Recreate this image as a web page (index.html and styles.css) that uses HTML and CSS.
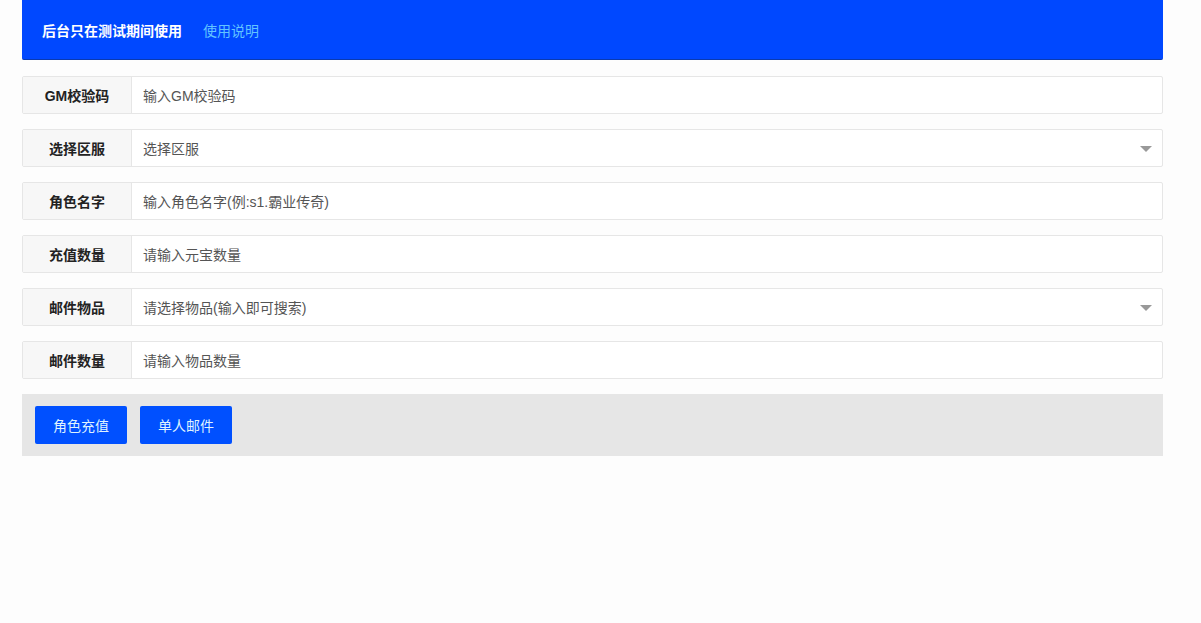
FILE: index.html
```html
<!DOCTYPE html>
<html>
<head>
  <meta charset="utf-8">
  <link rel="stylesheet" href="styles.css">
</head>
<body>
  <div class="gm-panel">
    <div class="notice">
      <span class="notice-text">后台只在测试期间使用</span>
      <a class="notice-link">使用说明</a>
    </div>

    <div class="form-row">
      <label class="row-label">GM校验码</label>
      <div class="row-input">输入GM校验码</div>
    </div>

    <div class="form-row">
      <label class="row-label">选择区服</label>
      <div class="row-input select">选择区服<span class="arrow"></span></div>
    </div>

    <div class="form-row">
      <label class="row-label">角色名字</label>
      <div class="row-input">输入角色名字(例:s1.霸业传奇)</div>
    </div>

    <div class="form-row">
      <label class="row-label">充值数量</label>
      <div class="row-input">请输入元宝数量</div>
    </div>

    <div class="form-row">
      <label class="row-label">邮件物品</label>
      <div class="row-input select">请选择物品(输入即可搜索)<span class="arrow"></span></div>
    </div>

    <div class="form-row">
      <label class="row-label">邮件数量</label>
      <div class="row-input">请输入物品数量</div>
    </div>

    <div class="actions">
      <button class="btn">角色充值</button>
      <button class="btn">单人邮件</button>
    </div>
  </div>
</body>
</html>
```

FILE: styles.css
```css
body {
  margin: 0;
  background-color: #fdfdfd;
  font-family: "Liberation Sans", "Noto Sans CJK SC", sans-serif;
  font-size: 14px;
  color: #333;
}

.gm-panel {
  width: 1141px;
  margin-left: 22px;
}

.notice {
  height: 59px;
  background-color: #0048ff;
  border-bottom: 1px solid #0a3ab0;
  border-radius: 0 0 2px 2px;
  display: flex;
  align-items: center;
  padding-left: 20px;
  margin-bottom: 16px;
}

.notice-text {
  color: #ffffff;
  font-weight: bold;
  font-size: 14px;
}

.notice-link {
  color: #63c5ff;
  margin-left: 21px;
  font-size: 14px;
}

.form-row {
  display: flex;
  height: 36px;
  border: 1px solid #e6e6e6;
  border-radius: 2px;
  background-color: #fff;
  margin-bottom: 15px;
}

.row-label {
  width: 108px;
  background-color: #f7f7f7;
  border-right: 1px solid #e6e6e6;
  display: flex;
  align-items: center;
  justify-content: center;
  font-weight: bold;
  color: #222;
}

.row-input {
  flex: 1;
  display: flex;
  align-items: center;
  padding-left: 11px;
  color: #555;
  position: relative;
}

.arrow {
  position: absolute;
  right: 10px;
  top: 16px;
  width: 0;
  height: 0;
  border-left: 6px solid transparent;
  border-right: 6px solid transparent;
  border-top: 6px solid #999;
}

.actions {
  margin-top: 2px;
  background-color: #e6e6e6;
  height: 62px;
  display: flex;
  align-items: center;
  padding-left: 13px;
  gap: 13px;
}

.btn {
  height: 38px;
  width: 92px;
  border: none;
  border-radius: 2px;
  background-color: #0050ff;
  color: #dff3ff;
  font-family: "Liberation Sans", "Noto Sans CJK SC", sans-serif;
  font-size: 14px;
  cursor: pointer;
}
```
